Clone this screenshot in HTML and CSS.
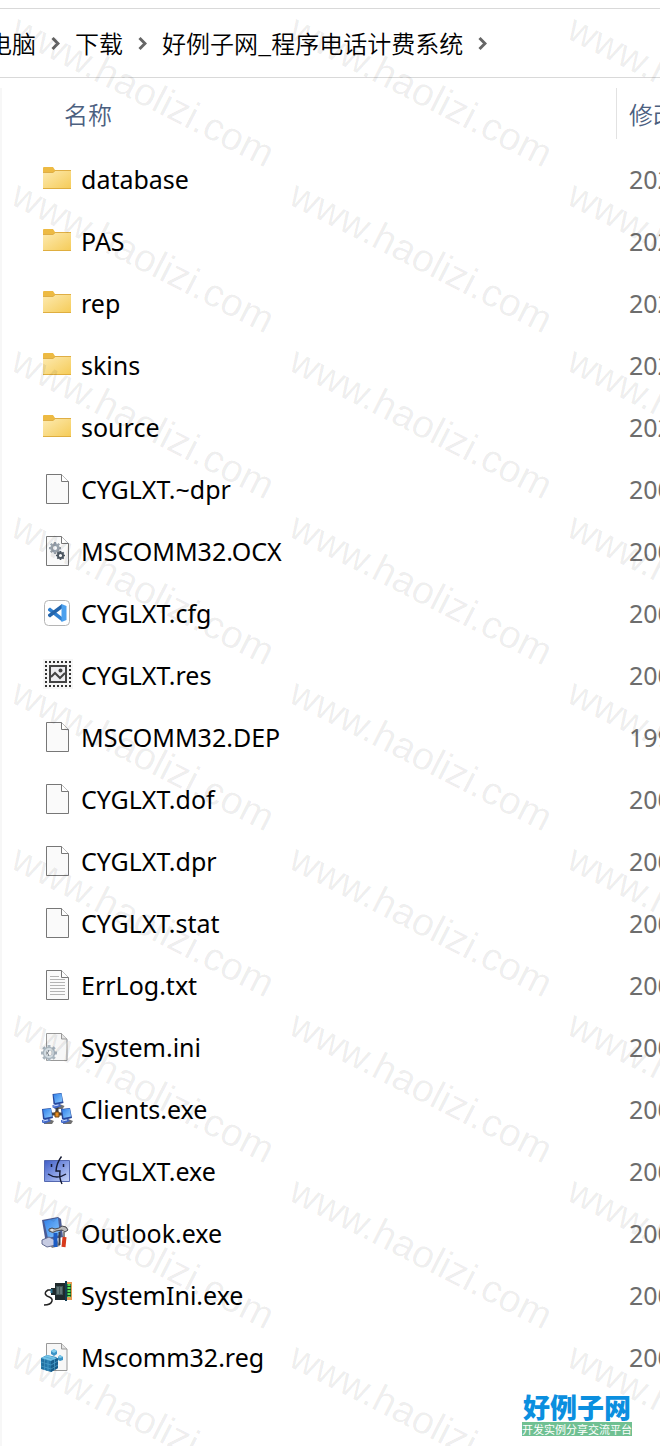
FILE: index.html
```html
<!DOCTYPE html>
<html lang="zh-CN">
<head>
  <meta charset="UTF-8" />
  <meta name="viewport" content="width=device-width, initial-scale=1.0"/>
  <title>好例子网_程序电话计费系统</title>
  <link rel="stylesheet" href="styles.css">
</head>
<body>
  <!-- shared icon shapes -->
  <svg class="defs" aria-hidden="true">
    <defs>
      <linearGradient id="gFolder" x1="0" y1="0" x2="1" y2="1">
        <stop offset="0" stop-color="#fdeab0"/>
        <stop offset="1" stop-color="#f5cb57"/>
      </linearGradient>
      <linearGradient id="gScreen" x1="0" y1="0" x2="1" y2="1">
        <stop offset="0" stop-color="#2f7fe8"/>
        <stop offset="1" stop-color="#8ccbff"/>
      </linearGradient>
      <linearGradient id="gFace" x1="0" y1="0" x2="1" y2="1">
        <stop offset="0" stop-color="#3f5dc6"/>
        <stop offset="0.5" stop-color="#8299e3"/>
        <stop offset="1" stop-color="#c9d5f8"/>
      </linearGradient>
      <symbol id="folder" viewBox="0 0 32 32">
        <path d="M2 5q0-1 1-1h9l2 3h16v5H2z" fill="#edba43"/>
        <path d="M2 10h10l2-2h16v18H2z" fill="url(#gFolder)"/>
        <path d="M2 25.500h28" stroke="#dfae3f"/>
        <path d="M2 9.500h10l2-2h16" fill="none" stroke="#dfae45"/>
      </symbol>
      <symbol id="file" viewBox="0 0 32 32">
        <path d="M5.500 1.500h15l7 7v22h-22z" fill="#fafafa" stroke="#777"/>
        <path d="M20.500 1.500v7h7" fill="#fff" stroke="#777"/>
      </symbol>
      <symbol id="page" viewBox="0 0 32 32">
        <path d="M5.500 2.500h15l5.500 5.500v21.500h-20.500z" fill="#f7f7f7" stroke="#999"/>
        <path d="M20.500 2.500v5.500h5.500" fill="#e4e4e4" stroke="#999"/>
      </symbol>
      <symbol id="gear" viewBox="-8 -8 16 16">
        <circle r="4.500" fill="none" stroke="currentColor" stroke-width="3.500"/>
        <path d="M0-8v3M0 5v3M-8 0h3M5 0h3M-5.700-5.700l2 2M3.700 3.700l2 2M5.700-5.700l-2 2M-3.700 3.700l-2 2" stroke="currentColor" stroke-width="3"/>
      </symbol>
      <symbol id="pc" viewBox="0 0 13 16">
        <path d="M3 13l5-2 5 2-2 3H3z" fill="#333" opacity=".7"/>
        <path d="M1 1l9-1 2 10-8 2-2-1z" fill="#27489c"/>
        <path d="M2 1.500l8-1 1 8-7.500 1.500z" fill="url(#gScreen)"/>
        <path d="M1 12l7-1 2 2-6 2.500-3-1z" fill="#4268c8"/>
        <path d="M2 13l5-1" stroke="#c8dcff"/>
      </symbol>
    </defs>
  </svg>

  <div class="window">
    <nav class="breadcrumb" aria-label="路径">
      <a href="#">电脑</a>
      <svg class="chevron" viewBox="0 0 9 18"><path d="M1.500 5l5.500 5.500-5.500 5.500"/></svg>
      <a href="#">下载</a>
      <svg class="chevron" viewBox="0 0 9 18"><path d="M1.500 5l5.500 5.500-5.500 5.500"/></svg>
      <a href="#">好例子网_程序电话计费系统</a>
      <svg class="chevron" viewBox="0 0 9 18"><path d="M1.500 5l5.500 5.500-5.500 5.500"/></svg>
    </nav>

    <main class="list">
      <table class="files">
        <thead>
          <tr>
            <th class="name"><div class="head">名称</div></th>
            <th class="date"><div class="head">修改</div></th>
          </tr>
        </thead>
        <tbody>
          <tr><td><div class="file"><svg class="icon"><use href="#folder"/></svg>database</div></td><td class="date">202</td></tr>
          <tr><td><div class="file"><svg class="icon"><use href="#folder"/></svg>PAS</div></td><td class="date">202</td></tr>
          <tr><td><div class="file"><svg class="icon"><use href="#folder"/></svg>rep</div></td><td class="date">202</td></tr>
          <tr><td><div class="file"><svg class="icon"><use href="#folder"/></svg>skins</div></td><td class="date">202</td></tr>
          <tr><td><div class="file"><svg class="icon"><use href="#folder"/></svg>source</div></td><td class="date">202</td></tr>
          <tr><td><div class="file"><svg class="icon"><use href="#file"/></svg>CYGLXT.~dpr</div></td><td class="date">200</td></tr>
          <tr>
            <td><div class="file">
              <svg class="icon" viewBox="0 0 32 32">
                <use href="#file"/>
                <use href="#gear" x="8" y="7" width="12" height="12" color="#98a2ac"/>
                <use href="#gear" x="15" y="16" width="9" height="9" color="#4d5761"/>
              </svg>MSCOMM32.OCX</div></td>
            <td class="date">200</td>
          </tr>
          <tr>
            <td><div class="file">
              <svg class="icon" viewBox="0 0 32 32">
                <rect x="3.500" y="3.500" width="25" height="25" rx="4" fill="#fff" stroke="#b5b5b5"/>
                <path d="M7 12l2-1.500 12 9.500v4.500L7 13.500z" fill="#2f7fd0"/>
                <path d="M7 19l2 1.500L21 11.500V7L7 17.500z" fill="#2565ab"/>
                <path d="M20.500 7l5 2v14l-5 2z" fill="#4ba0ee"/>
              </svg>CYGLXT.cfg</div></td>
            <td class="date">200</td>
          </tr>
          <tr>
            <td><div class="file">
              <svg class="icon" viewBox="0 0 32 32">
                <path d="M2 0h30v30H2z" fill="#f6f6f6"/>
                <path d="M4 3h26M4 27h26" stroke="#333" stroke-width="2" stroke-dasharray="2 2"/>
                <path d="M5 2v26M29 2v26" stroke="#333" stroke-width="2" stroke-dasharray="2 2"/>
                <path d="M9 7h16v16H9z" fill="#ededf0" stroke="#444" stroke-width="2"/>
                <path d="M10 18l4-4 5 5 5-5" fill="none" stroke="#444" stroke-width="2"/>
                <circle cx="19.500" cy="11.500" r="2" fill="#444"/>
              </svg>CYGLXT.res</div></td>
            <td class="date">200</td>
          </tr>
          <tr><td><div class="file"><svg class="icon"><use href="#file"/></svg>MSCOMM32.DEP</div></td><td class="date">199</td></tr>
          <tr><td><div class="file"><svg class="icon"><use href="#file"/></svg>CYGLXT.dof</div></td><td class="date">200</td></tr>
          <tr><td><div class="file"><svg class="icon"><use href="#file"/></svg>CYGLXT.dpr</div></td><td class="date">200</td></tr>
          <tr><td><div class="file"><svg class="icon"><use href="#file"/></svg>CYGLXT.stat</div></td><td class="date">200</td></tr>
          <tr>
            <td><div class="file">
              <svg class="icon" viewBox="0 0 32 32">
                <use href="#file"/>
                <path d="M9 7.500h9M9 10.500h15M9 13.500h15M9 16.500h15M9 19.500h15M9 22.500h15M9 25.500h15" stroke="#b4b4b4"/>
              </svg>ErrLog.txt</div></td>
            <td class="date">200</td>
          </tr>
          <tr>
            <td><div class="file">
              <svg class="icon" viewBox="0 0 32 32">
                <use href="#page"/>
                <use href="#gear" x="0" y="14" width="16" height="16" color="#a9b5be"/>
                <circle cx="8" cy="22" r="4" fill="none" stroke="#d3dce2" stroke-width="2"/>
                <path d="M8 19q-3 3 0 6" fill="none" stroke="#66727c"/>
              </svg>System.ini</div></td>
            <td class="date">200</td>
          </tr>
          <tr>
            <td><div class="file">
              <svg class="icon" viewBox="0 0 32 32">
                <path d="M16 13v8M9 21h14" stroke="#444" stroke-width="3"/>
                <use href="#pc" x="10" y="0" width="14" height="16"/>
                <use href="#pc" x="0" y="15" width="13" height="16"/>
                <use href="#pc" x="19" y="15" width="13" height="16"/>
                <path d="M14 19h4v5h-4z" fill="#e78c20" stroke="#704818"/>
              </svg>Clients.exe</div></td>
            <td class="date">200</td>
          </tr>
          <tr>
            <td><div class="file">
              <svg class="icon" viewBox="0 0 32 32">
                <path d="M3.500 5.500h25v21h-25z" fill="url(#gFace)" stroke="#5468b0"/>
                <path d="M20.500 1.500Q15.500 8 15 16h4q-1 7 2 13M7 19q9 6 18 0" fill="none" stroke="#151a33" stroke-width="1.400"/>
                <path d="M10.500 9v3M22.500 9v3" stroke="#151a33" stroke-width="1.500"/>
              </svg>CYGLXT.exe</div></td>
            <td class="date">200</td>
          </tr>
          <tr>
            <td><div class="file">
              <svg class="icon" viewBox="0 0 32 32">
                <path d="M5 23l10-2 4 8-8 2z" fill="#333" opacity=".6"/>
                <path d="M1 3l16-3 3 2 2 18-14 3-4-2z" fill="#4a5c96"/>
                <path d="M3 4l14-3 2 17-12 3z" fill="url(#gScreen)"/>
                <path d="M1 23l7-3 6 3 1 5-9 2-5-3z" fill="#c6cbe2" stroke="#626b91"/>
                <path d="M8 12q3-2 6 0l4-1 3-2q5 0 6 4l-3 2-3-2-6 1q-3 3-7 0z" fill="#bbb" stroke="#4b4b52"/>
                <circle cx="11" cy="13" r="1" fill="#eee"/>
                <path d="M14.500 16v14" stroke="#1c5cc4" stroke-width="4"/>
                <path d="M18.500 15v13" stroke="#39404d" stroke-width="2"/>
                <path d="M23 15v6" stroke="#888" stroke-width="2"/>
                <path d="M23.500 20l-1 10" stroke="#d83a1c" stroke-width="4"/>
              </svg>Outlook.exe</div></td>
            <td class="date">200</td>
          </tr>
          <tr>
            <td><div class="file">
              <svg class="icon" viewBox="0 0 32 32">
                <path d="M12 11H7q-5 3-1 6 6 2 5 5-1 4-8 4" fill="none" stroke="#222" stroke-width="1.500"/>
                <path d="M10 9h4V4h10v17H14v-5h-4z" fill="#1f2a2c"/>
                <path d="M15 7h7v9h-7z" fill="#3f5557"/>
                <path d="M17 8v7M20 8v7" stroke="#819594"/>
                <path d="M10.500 10v4" stroke="#2a7391" stroke-width="2"/>
                <path d="M26 3h5v18h-5z" fill="#e59a54"/>
                <path d="M25 2v20" stroke="#123e54" stroke-width="2"/>
                <path d="M28 5v13" stroke="#174a22" stroke-width="4"/>
                <path d="M28 5v13" stroke="#55dc57" stroke-width="3" stroke-dasharray="2 1"/>
              </svg>SystemIni.exe</div></td>
            <td class="date">200</td>
          </tr>
          <tr>
            <td><div class="file">
              <svg class="icon" viewBox="0 0 32 32">
                <use href="#page"/>
                <path d="M0 17l6-3 9 2 2 2v9l-7 4-10-3z" fill="#2477aa"/>
                <path d="M0 17l6-3 10 3-6 3z" fill="#74c4e8"/>
                <path d="M10 20l7-3v10l-7 4z" fill="#195e8d"/>
                <path d="M0 21l10 3 7-4M0 25l10 3 7-4M3.500 18v11M7 19v11M13.500 18v11M3 15.500l10 3" fill="none" stroke="#4fa3d0" stroke-width=".7"/>
                <path d="M10 10l3-2 3 2v3l-3 2-3-2zM17 16l2-2 3 2v3l-3 1-2-1z" fill="#3b94c7"/>
                <path d="M10 10l3-2 3 2-3 2zM17 16l2-2 3 2-3 1z" fill="#83cdec"/>
              </svg>Mscomm32.reg</div></td>
            <td class="date">200</td>
          </tr>
        </tbody>
      </table>
    </main>

    <div class="watermark" aria-hidden="true">
      <span>www.haolizi.com</span><span>www.haolizi.com</span><span>www.haolizi.com</span>
      <span>www.haolizi.com</span><span>www.haolizi.com</span><span>www.haolizi.com</span>
      <span>www.haolizi.com</span><span>www.haolizi.com</span><span>www.haolizi.com</span>
      <span>www.haolizi.com</span><span>www.haolizi.com</span><span>www.haolizi.com</span>
      <span>www.haolizi.com</span><span>www.haolizi.com</span><span>www.haolizi.com</span>
      <span>www.haolizi.com</span><span>www.haolizi.com</span><span>www.haolizi.com</span>
      <span>www.haolizi.com</span><span>www.haolizi.com</span><span>www.haolizi.com</span>
      <span>www.haolizi.com</span><span>www.haolizi.com</span><span>www.haolizi.com</span>
      <span>www.haolizi.com</span><span>www.haolizi.com</span><span>www.haolizi.com</span>
    </div>

    <div class="logo">
      <strong>好例子网</strong>
      <span>开发实例分享交流平台</span>
    </div>
  </div>
</body>
</html>
```
FILE: styles.css
```css
* {
  box-sizing: border-box;
}

body {
  margin: 0;
  background: #fff;
  color: #000;
  font-family: "Noto Sans", "Noto Sans CJK SC", sans-serif;
  font-size: 25px;
}

.defs {
  position: absolute;
  width: 0;
  height: 0;
}

.window {
  position: relative;
  display: flex;
  flex-direction: column;
  min-height: 100vh;
  padding-top: 8px;
  overflow: hidden;
}

/* path bar */
.breadcrumb {
  display: flex;
  align-items: center;
  gap: 15px;
  height: 70px;
  padding-bottom: 2px;
  border-top: 1px solid #d9d9d9;
  border-bottom: 1px solid #d9d9d9;
  font-size: 24px;
  white-space: nowrap;
}

.breadcrumb a {
  color: #000;
  font-family: "Noto Sans CJK SC", sans-serif;
  font-weight: 350;
  text-decoration: none;
}

.breadcrumb a:first-child {
  margin-left: -12px;
}

.chevron {
  flex: none;
  width: 9px;
  height: 18px;
  fill: none;
  stroke: #666;
  stroke-width: 3;
}

/* file list */
.list {
  flex: 1;
  margin-top: 10px;
  border-left: 2px solid #f7f7f7;
}

.files {
  width: 100%;
  table-layout: fixed;
  border-collapse: collapse;
  white-space: nowrap;
}

th {
  padding: 0 0 9px;
  color: #4c607f;
  font-family: "Noto Sans CJK SC", sans-serif;
  font-size: 24px;
  font-weight: 350;
  text-align: left;
}

.head {
  height: 51px;
  line-height: 52px;
  overflow: hidden;
}

th.name {
  padding-left: 62px;
}

th.date {
  width: 44px;
}

th.date .head {
  padding-left: 12px;
  border-left: 1px solid #e2e2e2;
}

td {
  height: 62px;
  padding: 0;
}

td.date {
  padding-left: 13px;
  overflow: hidden;
  color: #6d6d6d;
}

.file {
  display: flex;
  align-items: center;
  gap: 8px;
  padding-left: 39px;
}

.icon {
  flex: none;
  width: 32px;
  height: 32px;
}

/* overlays */
.watermark {
  position: absolute;
  inset: 0;
  display: grid;
  grid-template-columns: repeat(3, 278px);
  grid-auto-rows: 166px;
  padding: 8px 0 0 4px;
  overflow: hidden;
  color: rgba(0, 0, 0, 0.07);
  font-family: "Liberation Sans", Arial, sans-serif;
  font-size: 39px;
  pointer-events: none;
}

.watermark span {
  place-self: center;
  transform: rotate(27deg);
}

.logo {
  position: absolute;
  right: 28px;
  bottom: 10px;
  display: flex;
  flex-direction: column;
  color: #0b8fdf;
  text-align: center;
  white-space: nowrap;
}

.logo strong {
  font-family: "Noto Sans CJK SC", sans-serif;
  font-size: 27px;
  font-weight: 900;
  line-height: 30px;
}

.logo span {
  background: #6fc092;
  color: #fff;
  font-family: "Noto Sans CJK SC", sans-serif;
  font-size: 11px;
  line-height: 14px;
}
```
